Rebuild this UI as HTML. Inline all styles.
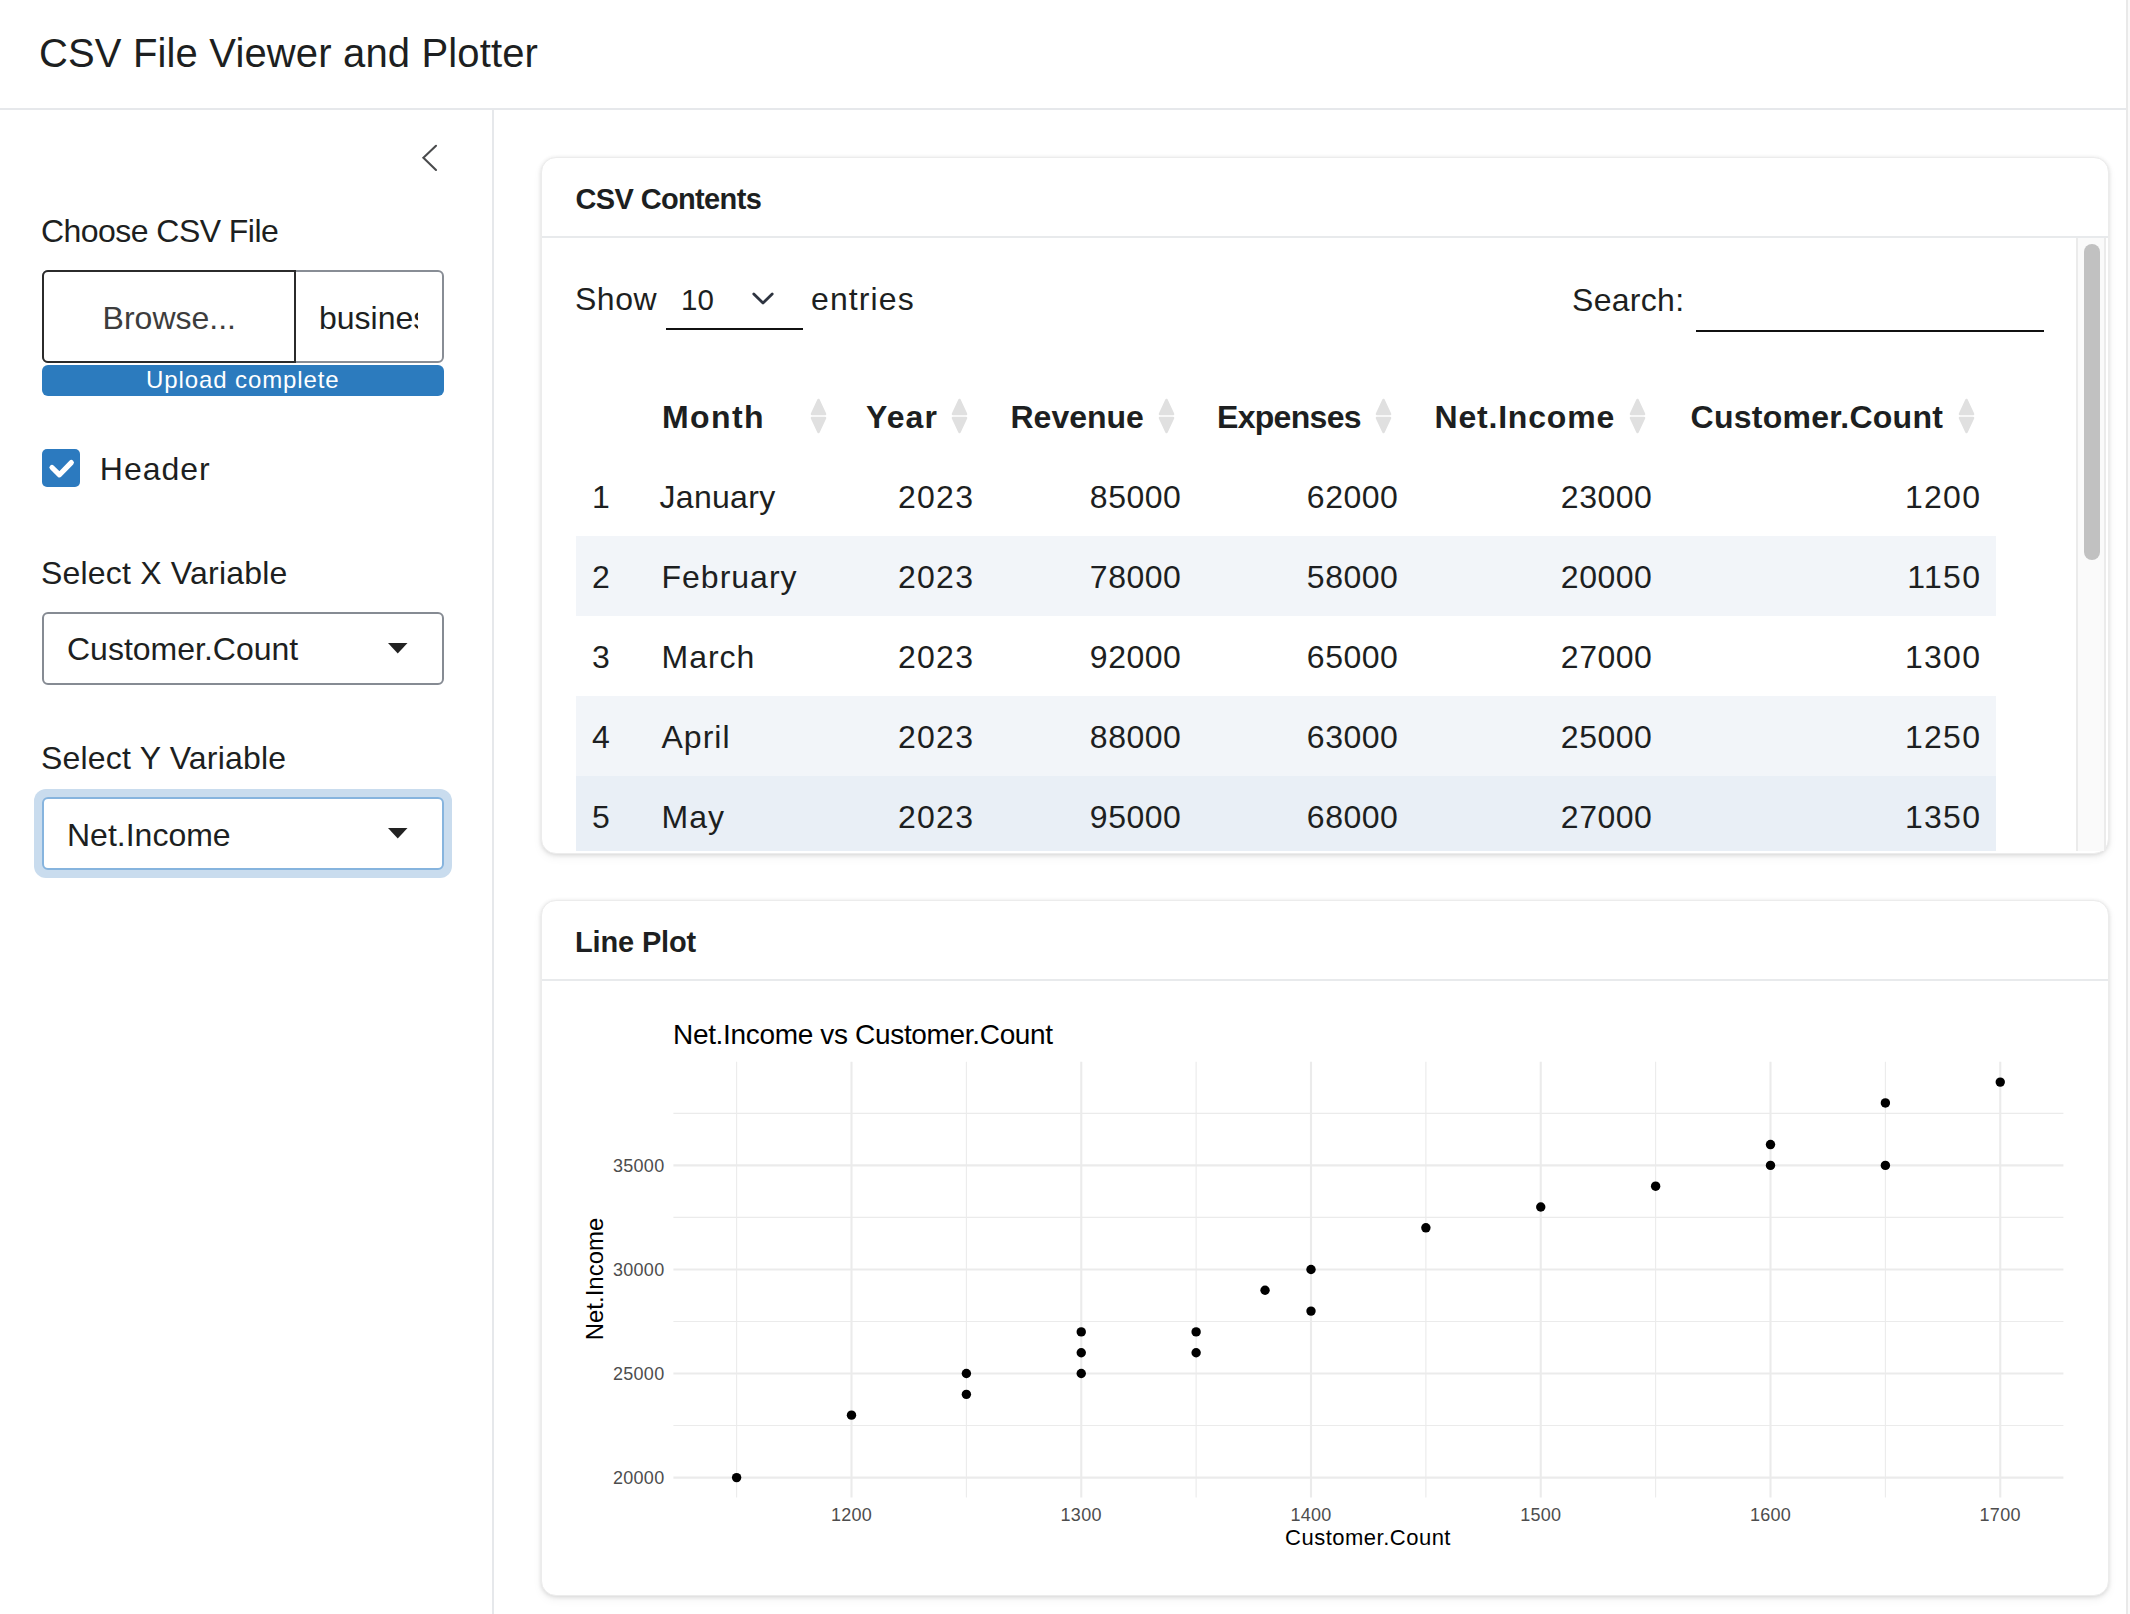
<!DOCTYPE html>
<html><head><meta charset="utf-8">
<style>
html,body{margin:0;padding:0;width:2130px;height:1614px;overflow:hidden;background:#fff;}
body{position:relative;font-family:"Liberation Sans",sans-serif;color:#1d1f21;}
.t{position:absolute;line-height:1;white-space:pre;}
.b{font-weight:700;}
.abs{position:absolute;box-sizing:border-box;}
</style></head>
<body>
<!-- header -->
<div class="t" style="left:39px;top:32.6px;font-size:40px;letter-spacing:0.15px;">CSV File Viewer and Plotter</div>
<div class="abs" style="left:0;top:108px;width:2126px;height:2px;background:#e6e8eb;"></div>
<div class="abs" style="left:2126px;top:0;width:2px;height:1614px;background:#e9e9e9;"></div>
<div class="abs" style="left:2128px;top:0;width:2px;height:1614px;background:#fafafa;"></div>

<!-- sidebar -->
<div class="abs" style="left:492px;top:110px;width:2px;height:1504px;background:#e6e8eb;"></div>
<svg class="abs" style="left:418px;top:140px" width="26" height="36" viewBox="0 0 26 36"><polyline points="18,5.8 5.4,17.8 18,30" fill="none" stroke="#4a4b4d" stroke-width="2.1" stroke-linecap="round"/></svg>

<div class="t" style="left:41px;top:215.2px;font-size:32px;letter-spacing:-0.55px;">Choose CSV File</div>
<div class="abs" style="left:42px;top:270px;width:402px;height:93px;border:2px solid #888d95;border-radius:6px;"></div>
<div class="abs" style="left:42px;top:270px;width:254px;height:93px;border:2px solid #2b2b2b;border-radius:6px 0 0 6px;background:#fff;"></div>
<div class="t" style="left:102.6px;top:301.9px;font-size:32px;color:#3d3d3d;">Browse...</div>
<div class="abs" style="left:296px;top:272px;width:122px;height:89px;overflow:hidden;"><div class="t" style="left:23px;top:29.9px;font-size:32px;">business_data.csv</div></div>
<div class="abs" style="left:42px;top:364.5px;width:402px;height:31px;background:#2c7bbe;border-radius:6px;"></div>
<div class="t" style="left:146px;top:368.1px;font-size:24px;letter-spacing:0.9px;color:#fff;">Upload complete</div>

<div class="abs" style="left:42px;top:449px;width:38px;height:38px;background:#2c7abf;border-radius:5px;"></div>
<svg class="abs" style="left:42px;top:449px" width="38" height="38" viewBox="0 0 38 38"><polyline points="10,18.5 17.5,25.8 29.3,13.6" fill="none" stroke="#fff" stroke-width="5.2" stroke-linecap="round" stroke-linejoin="round"/></svg>
<div class="t" style="left:99.8px;top:452.6px;font-size:32px;letter-spacing:1px;">Header</div>

<div class="t" style="left:41px;top:557.1px;font-size:32px;letter-spacing:0.2px;">Select X Variable</div>
<div class="abs" style="left:42px;top:612px;width:402px;height:72.5px;border:2px solid #868b93;border-radius:6px;background:#fff;"></div>
<div class="t" style="left:67px;top:633.2px;font-size:32px;">Customer.Count</div>
<svg class="abs" style="left:386px;top:641px" width="24" height="14" viewBox="0 0 24 14"><polygon points="2,2 21.5,2 11.75,12.5" fill="#222"/></svg>

<div class="t" style="left:41px;top:741.5px;font-size:32px;letter-spacing:0.2px;">Select Y Variable</div>
<div class="abs" style="left:34px;top:789px;width:418px;height:89px;border-radius:12px;background:#c9dcee;"></div>
<div class="abs" style="left:42px;top:797px;width:402px;height:72.5px;border:2px solid #86b4de;border-radius:6px;background:#fff;"></div>
<div class="t" style="left:67px;top:818.9px;font-size:32px;">Net.Income</div>
<svg class="abs" style="left:386px;top:826px" width="24" height="14" viewBox="0 0 24 14"><polygon points="2,2 21.5,2 11.75,12.5" fill="#222"/></svg>

<!-- card 1 -->
<div class="abs" style="left:541px;top:157px;width:1568px;height:697px;border:1px solid #ececec;border-radius:15px;background:#fff;box-shadow:0 1px 4px rgba(0,0,0,0.13),0 4px 10px rgba(0,0,0,0.05);"></div>
<div class="t b" style="left:575.5px;top:185px;font-size:29px;letter-spacing:-0.64px;">CSV Contents</div>
<div class="abs" style="left:542px;top:236px;width:1566px;height:2px;background:#e8eaec;"></div>

<!-- card1 body -->
<div class="abs" style="left:0;top:0;width:2130px;height:851px;overflow:hidden"><div class="abs" style="left:576px;top:536px;width:1420px;height:80px;background:#f2f5f9;"></div>
<div class="abs" style="left:576px;top:696px;width:1420px;height:80px;background:#f2f5f9;"></div>
<div class="abs" style="left:576px;top:776px;width:1420px;height:80px;background:#e9eff6;"></div>
<div class="t" style="left:575px;top:282.9px;font-size:32px;letter-spacing:0.5px;">Show</div>
<div class="t" style="left:681px;top:285.0px;font-size:29.5px;">10</div>
<svg class="abs" style="left:750px;top:290px" width="26" height="18" viewBox="0 0 26 18"><polyline points="3.8,4 13,13 22.2,4" fill="none" stroke="#2e3440" stroke-width="2.8" stroke-linecap="round" stroke-linejoin="round"/></svg>
<div class="abs" style="left:666px;top:328px;width:137px;height:2px;background:#111;"></div>
<div class="t" style="left:811px;top:282.9px;font-size:32px;letter-spacing:1.1px;">entries</div>
<div class="t" style="left:1572px;top:283.9px;font-size:32px;letter-spacing:0.3px;">Search:</div>
<div class="abs" style="left:1696px;top:330px;width:348px;height:2px;background:#111;"></div>
<div class="t b" style="left:662px;top:400.9px;font-size:32px;letter-spacing:1.4px;">Month</div>
<svg class="abs" style="left:810.0px;top:398px" width="17" height="36" viewBox="0 0 17 36"><path d="M8.5 2 L15 16 L2 16 Z" fill="#e0e0e0" stroke="#e0e0e0" stroke-width="2.6" stroke-linejoin="round"/><path d="M2 20 L15 20 L8.5 34 Z" fill="#e0e0e0" stroke="#e0e0e0" stroke-width="2.6" stroke-linejoin="round"/></svg>
<div class="t b" style="left:866px;top:400.9px;font-size:32px;letter-spacing:1.1px;">Year</div>
<svg class="abs" style="left:951.0px;top:398px" width="17" height="36" viewBox="0 0 17 36"><path d="M8.5 2 L15 16 L2 16 Z" fill="#e0e0e0" stroke="#e0e0e0" stroke-width="2.6" stroke-linejoin="round"/><path d="M2 20 L15 20 L8.5 34 Z" fill="#e0e0e0" stroke="#e0e0e0" stroke-width="2.6" stroke-linejoin="round"/></svg>
<div class="t b" style="left:1010.5px;top:400.9px;font-size:32px;letter-spacing:0px;">Revenue</div>
<svg class="abs" style="left:1158.0px;top:398px" width="17" height="36" viewBox="0 0 17 36"><path d="M8.5 2 L15 16 L2 16 Z" fill="#e0e0e0" stroke="#e0e0e0" stroke-width="2.6" stroke-linejoin="round"/><path d="M2 20 L15 20 L8.5 34 Z" fill="#e0e0e0" stroke="#e0e0e0" stroke-width="2.6" stroke-linejoin="round"/></svg>
<div class="t b" style="left:1217px;top:400.9px;font-size:32px;letter-spacing:-0.7px;">Expenses</div>
<svg class="abs" style="left:1375.0px;top:398px" width="17" height="36" viewBox="0 0 17 36"><path d="M8.5 2 L15 16 L2 16 Z" fill="#e0e0e0" stroke="#e0e0e0" stroke-width="2.6" stroke-linejoin="round"/><path d="M2 20 L15 20 L8.5 34 Z" fill="#e0e0e0" stroke="#e0e0e0" stroke-width="2.6" stroke-linejoin="round"/></svg>
<div class="t b" style="left:1434.5px;top:400.9px;font-size:32px;letter-spacing:0.8px;">Net.Income</div>
<svg class="abs" style="left:1628.7px;top:398px" width="17" height="36" viewBox="0 0 17 36"><path d="M8.5 2 L15 16 L2 16 Z" fill="#e0e0e0" stroke="#e0e0e0" stroke-width="2.6" stroke-linejoin="round"/><path d="M2 20 L15 20 L8.5 34 Z" fill="#e0e0e0" stroke="#e0e0e0" stroke-width="2.6" stroke-linejoin="round"/></svg>
<div class="t b" style="left:1690.5px;top:400.9px;font-size:32px;letter-spacing:0.27px;">Customer.Count</div>
<svg class="abs" style="left:1957.8px;top:398px" width="17" height="36" viewBox="0 0 17 36"><path d="M8.5 2 L15 16 L2 16 Z" fill="#e0e0e0" stroke="#e0e0e0" stroke-width="2.6" stroke-linejoin="round"/><path d="M2 20 L15 20 L8.5 34 Z" fill="#e0e0e0" stroke="#e0e0e0" stroke-width="2.6" stroke-linejoin="round"/></svg>
<div class="t" style="left:592px;top:480.9px;font-size:32px;">1</div>
<div class="t" style="left:659.5px;top:480.9px;font-size:32px;letter-spacing:0.3px;">January</div>
<div class="t" style="right:1155.7px;top:480.9px;font-size:32px;letter-spacing:1.3px;">2023</div>
<div class="t" style="right:948.7px;top:480.9px;font-size:32px;letter-spacing:0.5px;">85000</div>
<div class="t" style="right:731.7px;top:480.9px;font-size:32px;letter-spacing:0.5px;">62000</div>
<div class="t" style="right:477.7px;top:480.9px;font-size:32px;letter-spacing:0.5px;">23000</div>
<div class="t" style="right:148.7px;top:480.9px;font-size:32px;letter-spacing:1.3px;">1200</div>
<div class="t" style="left:592px;top:560.9px;font-size:32px;">2</div>
<div class="t" style="left:661.5px;top:560.9px;font-size:32px;letter-spacing:1.0px;">February</div>
<div class="t" style="right:1155.7px;top:560.9px;font-size:32px;letter-spacing:1.3px;">2023</div>
<div class="t" style="right:948.7px;top:560.9px;font-size:32px;letter-spacing:0.5px;">78000</div>
<div class="t" style="right:731.7px;top:560.9px;font-size:32px;letter-spacing:0.5px;">58000</div>
<div class="t" style="right:477.7px;top:560.9px;font-size:32px;letter-spacing:0.5px;">20000</div>
<div class="t" style="right:148.7px;top:560.9px;font-size:32px;letter-spacing:1.3px;">1150</div>
<div class="t" style="left:592px;top:640.9px;font-size:32px;">3</div>
<div class="t" style="left:661.5px;top:640.9px;font-size:32px;letter-spacing:1.0px;">March</div>
<div class="t" style="right:1155.7px;top:640.9px;font-size:32px;letter-spacing:1.3px;">2023</div>
<div class="t" style="right:948.7px;top:640.9px;font-size:32px;letter-spacing:0.5px;">92000</div>
<div class="t" style="right:731.7px;top:640.9px;font-size:32px;letter-spacing:0.5px;">65000</div>
<div class="t" style="right:477.7px;top:640.9px;font-size:32px;letter-spacing:0.5px;">27000</div>
<div class="t" style="right:148.7px;top:640.9px;font-size:32px;letter-spacing:1.3px;">1300</div>
<div class="t" style="left:592px;top:720.9px;font-size:32px;">4</div>
<div class="t" style="left:661.5px;top:720.9px;font-size:32px;letter-spacing:1.0px;">April</div>
<div class="t" style="right:1155.7px;top:720.9px;font-size:32px;letter-spacing:1.3px;">2023</div>
<div class="t" style="right:948.7px;top:720.9px;font-size:32px;letter-spacing:0.5px;">88000</div>
<div class="t" style="right:731.7px;top:720.9px;font-size:32px;letter-spacing:0.5px;">63000</div>
<div class="t" style="right:477.7px;top:720.9px;font-size:32px;letter-spacing:0.5px;">25000</div>
<div class="t" style="right:148.7px;top:720.9px;font-size:32px;letter-spacing:1.3px;">1250</div>
<div class="t" style="left:592px;top:800.9px;font-size:32px;">5</div>
<div class="t" style="left:661.5px;top:800.9px;font-size:32px;letter-spacing:1.0px;">May</div>
<div class="t" style="right:1155.7px;top:800.9px;font-size:32px;letter-spacing:1.3px;">2023</div>
<div class="t" style="right:948.7px;top:800.9px;font-size:32px;letter-spacing:0.5px;">95000</div>
<div class="t" style="right:731.7px;top:800.9px;font-size:32px;letter-spacing:0.5px;">68000</div>
<div class="t" style="right:477.7px;top:800.9px;font-size:32px;letter-spacing:0.5px;">27000</div>
<div class="t" style="right:148.7px;top:800.9px;font-size:32px;letter-spacing:1.3px;">1350</div></div>
<!-- scrollbar -->
<div class="abs" style="left:2076px;top:238px;width:30px;height:613px;background:#fafafa;border-left:2px solid #ebebeb;border-right:2px solid #ebebeb;"></div>
<div class="abs" style="left:2084px;top:244px;width:16px;height:316px;background:#c1c1c1;border-radius:8px;"></div>

<!-- card 2 -->
<div class="abs" style="left:541px;top:900px;width:1568px;height:696px;border:1px solid #ececec;border-radius:15px;background:#fff;box-shadow:0 1px 4px rgba(0,0,0,0.13),0 4px 10px rgba(0,0,0,0.05);"></div>
<div class="t b" style="left:575px;top:928.2px;font-size:29px;letter-spacing:-0.15px;">Line Plot</div>
<div class="abs" style="left:542px;top:979px;width:1566px;height:2px;background:#e8eaec;"></div>

<svg class="abs" style="left:0;top:0" width="2130" height="1614" viewBox="0 0 2130 1614"><line x1="736.62" y1="1061.8" x2="736.62" y2="1497.4" stroke="#ebebeb" stroke-width="1.1"/><line x1="966.38" y1="1061.8" x2="966.38" y2="1497.4" stroke="#ebebeb" stroke-width="1.1"/><line x1="1196.12" y1="1061.8" x2="1196.12" y2="1497.4" stroke="#ebebeb" stroke-width="1.1"/><line x1="1425.88" y1="1061.8" x2="1425.88" y2="1497.4" stroke="#ebebeb" stroke-width="1.1"/><line x1="1655.62" y1="1061.8" x2="1655.62" y2="1497.4" stroke="#ebebeb" stroke-width="1.1"/><line x1="1885.38" y1="1061.8" x2="1885.38" y2="1497.4" stroke="#ebebeb" stroke-width="1.1"/><line x1="673.4" y1="1425.56" x2="2063.4" y2="1425.56" stroke="#ebebeb" stroke-width="1.1"/><line x1="673.4" y1="1321.49" x2="2063.4" y2="1321.49" stroke="#ebebeb" stroke-width="1.1"/><line x1="673.4" y1="1217.41" x2="2063.4" y2="1217.41" stroke="#ebebeb" stroke-width="1.1"/><line x1="673.4" y1="1113.34" x2="2063.4" y2="1113.34" stroke="#ebebeb" stroke-width="1.1"/><line x1="851.50" y1="1061.8" x2="851.50" y2="1497.4" stroke="#ebebeb" stroke-width="2.1"/><line x1="1081.25" y1="1061.8" x2="1081.25" y2="1497.4" stroke="#ebebeb" stroke-width="2.1"/><line x1="1311.00" y1="1061.8" x2="1311.00" y2="1497.4" stroke="#ebebeb" stroke-width="2.1"/><line x1="1540.75" y1="1061.8" x2="1540.75" y2="1497.4" stroke="#ebebeb" stroke-width="2.1"/><line x1="1770.50" y1="1061.8" x2="1770.50" y2="1497.4" stroke="#ebebeb" stroke-width="2.1"/><line x1="2000.25" y1="1061.8" x2="2000.25" y2="1497.4" stroke="#ebebeb" stroke-width="2.1"/><line x1="673.4" y1="1477.60" x2="2063.4" y2="1477.60" stroke="#ebebeb" stroke-width="2.1"/><line x1="673.4" y1="1373.52" x2="2063.4" y2="1373.52" stroke="#ebebeb" stroke-width="2.1"/><line x1="673.4" y1="1269.45" x2="2063.4" y2="1269.45" stroke="#ebebeb" stroke-width="2.1"/><line x1="673.4" y1="1165.38" x2="2063.4" y2="1165.38" stroke="#ebebeb" stroke-width="2.1"/><circle cx="736.62" cy="1477.60" r="4.7" fill="#000"/><circle cx="851.50" cy="1415.15" r="4.7" fill="#000"/><circle cx="966.38" cy="1373.52" r="4.7" fill="#000"/><circle cx="966.38" cy="1394.34" r="4.7" fill="#000"/><circle cx="1081.25" cy="1331.89" r="4.7" fill="#000"/><circle cx="1081.25" cy="1352.71" r="4.7" fill="#000"/><circle cx="1081.25" cy="1373.52" r="4.7" fill="#000"/><circle cx="1196.12" cy="1331.89" r="4.7" fill="#000"/><circle cx="1196.12" cy="1352.71" r="4.7" fill="#000"/><circle cx="1265.05" cy="1290.26" r="4.7" fill="#000"/><circle cx="1311.00" cy="1269.45" r="4.7" fill="#000"/><circle cx="1311.00" cy="1311.08" r="4.7" fill="#000"/><circle cx="1425.88" cy="1227.82" r="4.7" fill="#000"/><circle cx="1540.75" cy="1207.00" r="4.7" fill="#000"/><circle cx="1655.62" cy="1186.19" r="4.7" fill="#000"/><circle cx="1770.50" cy="1144.56" r="4.7" fill="#000"/><circle cx="1770.50" cy="1165.38" r="4.7" fill="#000"/><circle cx="1885.38" cy="1102.93" r="4.7" fill="#000"/><circle cx="1885.38" cy="1165.38" r="4.7" fill="#000"/><circle cx="2000.25" cy="1082.11" r="4.7" fill="#000"/></svg>
<div class="t" style="right:1465.5px;top:1468.9px;font-size:18px;color:#4d4d4d;letter-spacing:0.3px;">20000</div>
<div class="t" style="right:1465.5px;top:1364.8px;font-size:18px;color:#4d4d4d;letter-spacing:0.3px;">25000</div>
<div class="t" style="right:1465.5px;top:1260.7px;font-size:18px;color:#4d4d4d;letter-spacing:0.3px;">30000</div>
<div class="t" style="right:1465.5px;top:1156.6px;font-size:18px;color:#4d4d4d;letter-spacing:0.3px;">35000</div>
<div class="t" style="left:751.5px;width:200px;text-align:center;top:1506.3px;font-size:18px;color:#4d4d4d;letter-spacing:0.3px;">1200</div>
<div class="t" style="left:981.2px;width:200px;text-align:center;top:1506.3px;font-size:18px;color:#4d4d4d;letter-spacing:0.3px;">1300</div>
<div class="t" style="left:1211.0px;width:200px;text-align:center;top:1506.3px;font-size:18px;color:#4d4d4d;letter-spacing:0.3px;">1400</div>
<div class="t" style="left:1440.8px;width:200px;text-align:center;top:1506.3px;font-size:18px;color:#4d4d4d;letter-spacing:0.3px;">1500</div>
<div class="t" style="left:1670.5px;width:200px;text-align:center;top:1506.3px;font-size:18px;color:#4d4d4d;letter-spacing:0.3px;">1600</div>
<div class="t" style="left:1900.2px;width:200px;text-align:center;top:1506.3px;font-size:18px;color:#4d4d4d;letter-spacing:0.3px;">1700</div>
<div class="t" style="left:673px;top:1020.6px;font-size:28px;letter-spacing:-0.33px;color:#000;">Net.Income vs Customer.Count</div>
<div class="t" style="left:1218px;width:300px;text-align:center;top:1527.2px;font-size:22px;letter-spacing:0.5px;color:#000;">Customer.Count</div>
<div class="t" style="left:445px;top:1267px;width:300px;height:24px;text-align:center;font-size:24px;color:#000;transform:rotate(-90deg);transform-origin:150px 12px;">Net.Income</div>
</body></html>
